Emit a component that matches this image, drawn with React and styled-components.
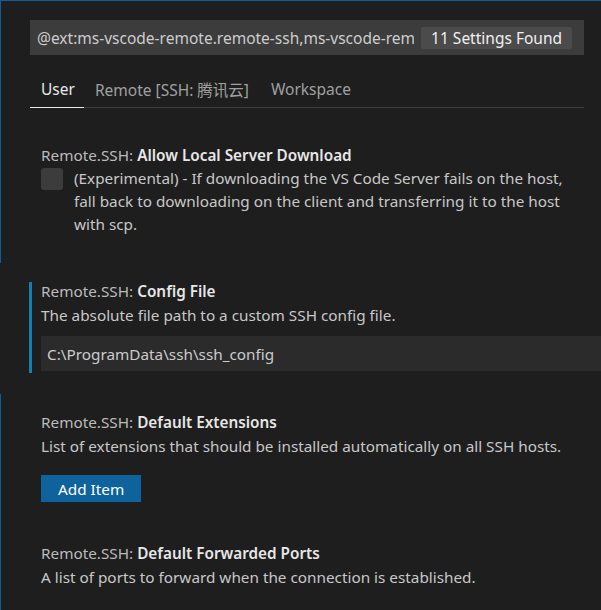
import React from 'react';
import styled, { createGlobalStyle } from 'styled-components';

const GlobalStyle = createGlobalStyle`
  html, body {
    margin: 0;
    padding: 0;
    background: #1e1e1e;
    overflow: hidden;
  }
  * {
    box-sizing: border-box;
  }
`;

const Frame = styled.div`
  width: 601px;
  height: 610px;
  overflow: hidden;
  background: #1e1e1e;
  border-top: 1px solid #0e5d96;
  font-family: "Noto Sans", "Noto Sans CJK SC", sans-serif;
  font-size: 15.3px;
  color: #cccccc;
`;

const Header = styled.div`
  border-left: 1px solid #0e5d96;
  padding: 19px 17px 0 29px;
`;

const SearchBox = styled.div`
  height: 35px;
  background: #3c3c3c;
  display: flex;
  align-items: center;
  padding: 0 12px 0 7px;
  gap: 7px;
`;

const SearchText = styled.div`
  flex: 1;
  min-width: 0;
  overflow: hidden;
  white-space: nowrap;
  font-size: 15.5px;
  color: #cccccc;
`;

const CountBadge = styled.div`
  height: 22px;
  padding: 0 10px;
  display: flex;
  align-items: center;
  background: #4b4b4b;
  border-radius: 2px;
  color: #f0f0f0;
  font-size: 15.5px;
  white-space: nowrap;
`;

const TabBar = styled.div`
  display: flex;
  margin-top: 16px;
  border-bottom: 1px solid #3f3f3f;
`;

const Tab = styled.div`
  height: 37px;
  margin-bottom: -1px;
  padding: 0 ${p => (p.active ? '9px 0 11px' : '11px')};
  display: flex;
  align-items: center;
  font-size: 15.5px;
  color: ${p => (p.active ? '#e7e7e7' : '#a0a0a0')};
  border-bottom: 1px solid ${p => (p.active ? '#e7e7e7' : 'transparent')};
`;

const List = styled.div`
  border-left: 1px solid #0e5d96;
  height: 19px;
`;

const Row = styled.div`
  border-left: 1px solid ${p => (p.focused ? 'transparent' : '#0e5d96')};
  padding: ${p => p.pad || '19px 0 21px 28px'};
`;

const Contents = styled.div`
  border-left: 3px solid ${p => (p.focused ? '#127fae' : 'transparent')};
  padding: 0 0 2px 9px;
`;

const Title = styled.div`
  line-height: 18px;
  color: #bbbbbb;
  white-space: nowrap;
`;

const Name = styled.span`
  color: #e7e7e7;
  font-weight: 600;
`;

const Desc = styled.div`
  margin-top: 4px;
  line-height: 23px;
  max-width: 545px;
  color: #c8c8c8;
`;

const BoolLine = styled.div`
  display: flex;
  gap: 11px;
  margin-top: 3px;
  padding-bottom: 4px;
`;

const CheckBox = styled.div`
  flex: none;
  width: 22px;
  height: 22px;
  margin-top: 1px;
  background: #3c3c3c;
  border-radius: 3px;
`;

const BoolDesc = styled.div`
  line-height: 23px;
  max-width: 500px;
  color: #c8c8c8;
`;

const TextInput = styled.div`
  margin-top: 9px;
  height: 35px;
  width: 600px;
  background: #2b2b2b;
  display: flex;
  align-items: center;
  padding-left: 6px;
  color: #cccccc;
`;

const Button = styled.button`
  margin-top: 17px;
  height: 27px;
  padding: 0 17px;
  border: none;
  background: #0e639c;
  color: #ffffff;
  font-family: inherit;
  font-size: 15.3px;
`;

const Setting = ({ name, focused, pad, children }) => (
  <Row focused={focused} pad={pad}>
    <Contents focused={focused}>
      <Title>
        Remote.SSH: <Name>{name}</Name>
      </Title>
      {children}
    </Contents>
  </Row>
);

export default function App() {
  return (
    <>
      <GlobalStyle />
      <Frame>
        <Header>
          <SearchBox>
            <SearchText>@ext:ms-vscode-remote.remote-ssh,ms-vscode-remote.remote-ssh-edit</SearchText>
            <CountBadge>11 Settings Found</CountBadge>
          </SearchBox>
          <TabBar>
            <Tab active>User</Tab>
            <Tab>Remote [SSH: 腾讯云]</Tab>
            <Tab>Workspace</Tab>
          </TabBar>
        </Header>
        <List />
        <Setting name="Allow Local Server Download">
          <BoolLine>
            <CheckBox />
            <BoolDesc>
              (Experimental) - If downloading the VS Code Server fails on the host, fall back to
              downloading on the client and transferring it to the host with scp.
            </BoolDesc>
          </BoolLine>
        </Setting>
        <Setting name="Config File" focused>
          <Desc>The absolute file path to a custom SSH config file.</Desc>
          <TextInput>C:\ProgramData\ssh\ssh_config</TextInput>
        </Setting>
        <Setting name="Default Extensions">
          <Desc>List of extensions that should be installed automatically on all SSH hosts.</Desc>
          <Button>Add Item</Button>
        </Setting>
        <Setting name="Default Forwarded Ports" pad="19px 0 2px 28px">
          <Desc>A list of ports to forward when the connection is established.</Desc>
        </Setting>
        <Setting name="Enable Dynamic Forwarding" pad="15px 0 0 28px" />
      </Frame>
    </>
  );
}
